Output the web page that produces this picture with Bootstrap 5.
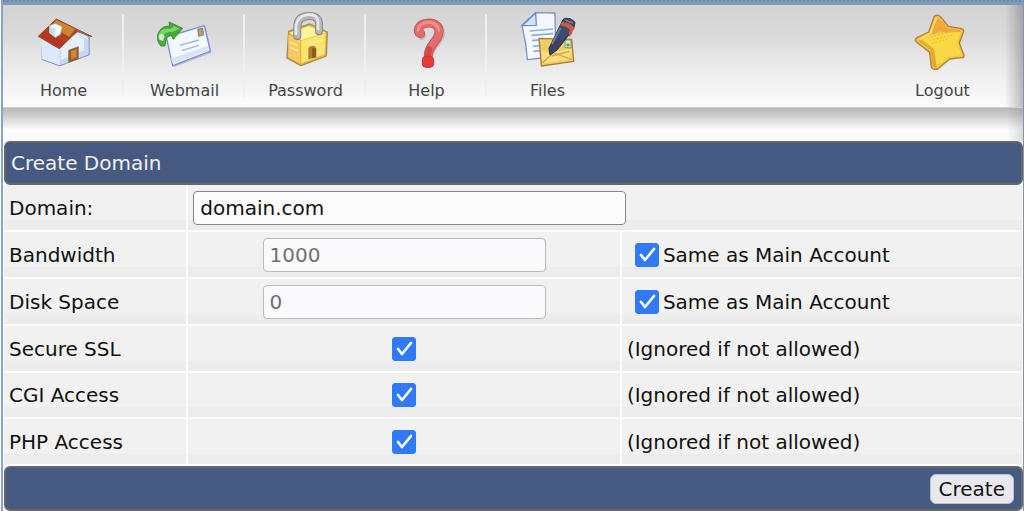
<!DOCTYPE html>
<html lang="en">
<head>
<meta charset="utf-8">
<meta name="viewport" content="width=device-width, initial-scale=1">
<title>Create Domain</title>
<link href="https://cdn.jsdelivr.net/npm/bootstrap@5.3.0/dist/css/bootstrap.min.css" rel="stylesheet">
<style>
  body { font-family: "DejaVu Sans", Verdana, sans-serif; font-size: 20px; line-height: 24px; color: #111; background: #fcfcfc; }
  .frame { border-left: 2px solid #8ba3c4; border-right: 1px solid #8093b5; margin-left: 1px; }
  .top-strip { height: 5px; background: repeating-linear-gradient(90deg, #6c89a9 0 2px, #7e99b6 2px 4px) top / 100% 2px no-repeat #809ab8; }
  .toolbar { height: 103px; background: linear-gradient(90deg, transparent calc(100% - 18px), rgba(90, 90, 90, .4)), linear-gradient(#d3d3d3, #dadada 30%, #e8e8e8 55%, #f3f3f5 80%, #fcfcfc); border-bottom: 1px solid #d0d0d0; }
  .toolbar-shade { height: 33px; background: linear-gradient(90deg, transparent calc(100% - 16px), rgba(120, 120, 120, .25)), linear-gradient(#bababa 0, #cacaca 7px, #ededed 17px, #fcfcfc 22px); }
  .tool { width: 121px; padding-top: 5px; font-size: 16px; line-height: 20px; color: #444; }
  .tool:hover { color: #222; }
  .tool svg { width: 60px; height: 60px; margin-bottom: 11px; }
  .tool-last { margin-right: 20px; }
  .tool-rule { background: linear-gradient(90deg, transparent calc(100% - 2px), #efefef 0) 0 9px / 100% 83px no-repeat; }
  .bar { min-height: 44px; margin-left: 1px; padding: 0 7px 0 5px; color: #f0f0f0; background: #465981; border: 2px solid #67676a; border-radius: 6px; }
  .bar-foot { min-height: 45px; }
  .settings { table-layout: fixed; margin-left: 1px; width: calc(100% - 2px); border-collapse: separate; border-spacing: 0; }
  .settings th, .settings td { height: 47px; padding: 0 5px; font-weight: 400; vertical-align: middle; border-right: 2px solid #fcfcfc; border-bottom: 2px solid #fcfcfc; background: linear-gradient(#f1f1f1 calc(100% - 10px), #ececec 0); }
  .settings .short > * { height: 46px; }
  .settings tr > :last-child { border-right: 0; }
  .col-name { width: 18.1%; }
  .col-value { width: 42.6%; }
  .field { height: 34px; padding: 0 6px; color: #111; background: #fcfcfc; border: 1px solid #85858f; border-radius: 4px; font-size: 20px; }
  .field:disabled { color: #6f6f6f; background: #fafafc; border-color: #b9b9bf; opacity: 1; }
  .field-wide { width: 433px; max-width: 100%; }
  .field-mid { width: 283px; max-width: 100%; }
  .tick { flex: none; width: 24px; height: 24px; margin: 0; }
  .tick.form-check-input[type=checkbox] { border-radius: 3px; }
  .tick.form-check-input:checked { background-color: #317af7; border-color: #317af7; background-size: 24px; background-position: center; background-image: url("data:image/svg+xml,%3Csvg xmlns='http://www.w3.org/2000/svg' viewBox='0 0 24 24'%3E%3Cpath d='M6 12l4 5 9-11' fill='none' stroke='white' stroke-width='2.6' stroke-linecap='round' stroke-linejoin='round'/%3E%3C/svg%3E"); }
  .create { height: 30px; padding: 0 8px; font-size: 20px; line-height: 24px; color: #111; background: #e9e9ed; border: 1px solid #c0c0c6; border-radius: 6px; }
  .create:hover { background: #dcdce0; }
</style>
</head>
<body>
<div class="frame">
  <header>
    <div class="top-strip"></div>
    <nav class="toolbar d-flex" aria-label="Main">
      <a href="#" class="tool tool-rule text-center text-decoration-none">
        <svg class="d-block mx-auto" viewBox="105 30 180 180" aria-hidden="true">
          <path d="M130 140 182 132 240 92 270 110V164L182 197 130 178Z" fill="#dce9fc" stroke="#7f94bd" stroke-width="4" stroke-linejoin="round"/>
          <path d="M128 120 182 148 236 100 268 118V163L182 196 129 177Z" fill="#dce9fc"/>
          <path d="M182 146V195L267 162V120L236 100Z" fill="#c4d8f8"/>
          <path d="M186 147 232 101 255 115V152L186 180Z" fill="#e6effe"/>
          <path d="M172 57 279 110 234 94 181 146 118 109Z" fill="#b63e22" stroke="#8a4a34" stroke-width="3" stroke-linejoin="round"/>
          <path d="M172 59 229 87 211 111 157 78Z" fill="#cd842e"/>
          <path d="M229 87 273 108 235 92Z" fill="#d77337"/>
          <path d="M120 108 181 144 196 129 135 94Z" fill="#b9341f"/>
          <path d="M152 77 169 71 188 80 184 103 169 112 152 99Z" fill="#f5fcff" stroke="#bddae3" stroke-width="2"/>
          <path d="M152 77 169 87V112L152 99Z" fill="#c6e2ef"/>
          <path d="M209 151 238 140V176L209 187Z" fill="#9a5a24" stroke="#8b5a34" stroke-width="2"/>
          <path d="M216 154 233 147V171L216 178Z" fill="#c9893d"/>
        </svg>Home</a>
      <a href="#" class="tool tool-rule text-center text-decoration-none">
        <svg class="d-block mx-auto" viewBox="468 30 180 180" aria-hidden="true">
          <path d="M508 120 617 77 634 155 521 199Z" fill="#8194ba" opacity=".55" transform="translate(3 3)"/>
          <path d="M502 111 616 77 634 153 521 197Z" fill="#f4f8ff" stroke="#7894cf" stroke-width="4" stroke-linejoin="round"/>
          <path d="M515 176 626 137 630 151 522 191Z" fill="#d8e4fc"/>
          <path d="M542 136 600 120M548 152 600 136" stroke="#9db7e8" stroke-width="4"/>
          <path d="M596 88 611 84 614 105 599 109Z" fill="#c89b48" stroke="#6980aa" stroke-width="3"/>
          <path d="M486 138C465 118 476 77 512 78L510 66 551 85 523 118 517 106C500 105 503 122 497 138Z" fill="#43ad35" stroke="#3b8e3c" stroke-width="3" stroke-linejoin="round"/>
          <path d="M479 117C476 93 491 84 513 87L526 79 542 86 522 95C493 96 488 108 489 119Z" fill="#8bdc76" opacity=".8"/>
          <path d="M480 106Q491 95 497 109L492 124 481 119Z" fill="#edffe9" opacity=".75"/>
        </svg>Webmail</a>
      <a href="#" class="tool tool-rule text-center text-decoration-none">
        <svg class="d-block mx-auto" viewBox="108 30 180 180" aria-hidden="true">
          <path d="M146 94 209 72 262 96 259 168 183 197 141 174Z" fill="#e8b63e" stroke="#a8894e" stroke-width="4" stroke-linejoin="round"/>
          <path d="M147 98 207 78 257 98 185 120Z" fill="#fff39b"/>
          <path d="M184 122 257 100 254 163 184 190Z" fill="#fbe46d"/>
          <path d="M145 104 179 121V190L145 171Z" fill="#f6ca60"/>
          <path d="M151 127 173 137M151 142 173 152M191 137 248 119M191 174 249 153" stroke="#ffed9a" stroke-width="4"/>
          <path d="M172 108V77Q174 49 207 48T237 79V94" fill="none" stroke="#808080" stroke-width="24" stroke-linecap="round"/>
          <path d="M172 107V77Q174 49 207 48T237 79V93" fill="none" stroke="#b5b6ba" stroke-width="19" stroke-linecap="round"/>
          <path d="M168 105V76Q173 47 205 44T234 77V90" fill="none" stroke="#e8e8ea" stroke-width="8"/>
          <path d="M205 150Q204 140 216 138T229 148V172L205 178Z" fill="#b47a2a"/>
          <path d="M216 145H228V171L216 174Z" fill="#8b5a22"/>
        </svg>Password</a>
      <a href="#" class="tool tool-rule text-center text-decoration-none">
        <svg class="d-block mx-auto" viewBox="477 30 180 180" aria-hidden="true">
          <path d="M548 105Q530 84 551 72C577 60 608 72 606 98C605 123 575 132 572 164" fill="none" stroke="#777" stroke-opacity=".3" stroke-width="22" stroke-linecap="round" transform="translate(4 3)"/>
          <path d="M548 101C532 94 543 73 564 70C590 66 605 79 603 98C601 123 573 134 571 164" fill="none" stroke="#bb5254" stroke-width="27" stroke-linecap="round"/>
          <path d="M548 101C532 94 543 73 564 70C590 66 605 79 603 98C601 123 573 134 571 164" fill="none" stroke="#e66b6b" stroke-width="22" stroke-linecap="round"/>
          <path d="M540 91Q544 68 570 67T603 91" fill="none" stroke="#f08f8d" stroke-width="9" stroke-linecap="round"/>
          <path d="M573 148 570 163" stroke="#db4846" stroke-width="19" stroke-linecap="round"/>
          <rect x="553" y="169" width="34" height="33" rx="11" fill="#e83a36" stroke="#c03a39" stroke-width="3"/>
        </svg>Help</a>
      <a href="#" class="tool text-center text-decoration-none">
        <svg class="d-block mx-auto" viewBox="111 30 180 180" aria-hidden="true">
          <path d="M164 38 222 39 223 102 237 168 139 179 134 131 123 76Z" fill="#f5f9ff" stroke="#7894cf" stroke-width="4" stroke-linejoin="round"/>
          <path d="M164 39 166 76 123 77Z" fill="#d2e2fb" stroke="#6589d2" stroke-width="4" stroke-linejoin="round"/>
          <path d="M146 93 216 87M151 106 216 101M153 122 190 118M156 139 184 136M157 154 184 151" stroke="#8bafeb" stroke-width="5"/>
          <path d="M174 115 272 118 278 184 181 198Z" fill="#f3cc60" stroke="#a77b3b" stroke-width="4" stroke-linejoin="round"/>
          <path d="M181 151 208 160 271 145V178L186 190Z" fill="#f9dd83"/>
          <path d="M184 189 217 158 272 179M212 168 265 154" fill="none" stroke="#d8a243" stroke-width="4"/>
          <path d="M252 120H270V144L252 143Z" fill="#dcedd1" stroke="#82925f" stroke-width="3"/>
          <circle cx="261" cy="135" r="5" fill="#5d9f58"/>
          <path d="M246 59Q267 48 282 68L278 86 229 149 207 165 204 145Z" fill="#394263" stroke="#252b43" stroke-width="3"/>
          <path d="M242 66Q265 65 280 82L272 103 264 112Q266 82 238 76Z" fill="#d05a3e"/>
          <path d="M248 55Q264 49 281 64L280 80Q264 66 246 67Z" fill="#394263"/>
          <path d="M238 78Q256 76 268 91L246 123 224 112Z" fill="#414a70"/>
          <path d="M253 61 276 69" stroke="#7887ac" stroke-width="5"/>
          <path d="M239 83 213 132" stroke="#6d789c" stroke-width="6"/>
        </svg>Files</a>
      <a href="#" class="tool tool-last text-center text-decoration-none ms-auto">
        <svg class="d-block mx-auto" viewBox="186 30 180 180" aria-hidden="true">
          <path d="M250 49Q260 42 269 51L292 79 331 86Q342 89 336 100L325 129 339 166Q340 174 331 173L296 177 263 205Q250 213 241 202L236 157 196 126Q189 118 198 113L233 96Z" fill="#f5c53c" stroke="#a88040" stroke-width="4" stroke-linejoin="round"/>
          <path d="M257 49 292 84 331 91 315 108 265 94 240 107Z" fill="#f0aa3c"/>
          <path d="M204 121 239 104 276 98 329 96 318 128 331 166 293 171 257 198 249 149Z" fill="#f9d845"/>
          <path d="M198 121 239 150 245 200 257 203 249 147 213 121Z" fill="#e5a632"/>
          <path d="M257 52 239 99 207 117" fill="none" stroke="#ffdf63" stroke-width="5"/>
          <path d="M229 112 316 91M236 121 312 103M243 130 294 116" stroke="#eab038" stroke-width="3" stroke-dasharray="4 7"/>
        </svg>Logout</a>
    </nav>
    <div class="toolbar-shade"></div>
  </header>

  <form onsubmit="return false">
    <h1 class="bar d-flex align-items-center mb-0 fs-5 fw-normal">Create Domain</h1>
    <table class="settings">
      <colgroup><col class="col-name"><col class="col-value"><col></colgroup>
      <tbody>
        <tr>
          <th scope="row"><label for="domain">Domain:</label></th>
          <td colspan="2"><input id="domain" class="field field-wide d-block" type="text" value="domain.com"></td>
        </tr>
        <tr>
          <th scope="row"><label for="bandwidth">Bandwidth</label></th>
          <td><input id="bandwidth" class="field field-mid d-block mx-auto" type="text" value="1000" disabled></td>
          <td><div class="d-flex align-items-center ps-2"><input id="same-bw" class="form-check-input tick me-1" type="checkbox" checked><label for="same-bw">Same as Main Account</label></div></td>
        </tr>
        <tr>
          <th scope="row"><label for="disk">Disk Space</label></th>
          <td><input id="disk" class="field field-mid d-block mx-auto" type="text" value="0" disabled></td>
          <td><div class="d-flex align-items-center ps-2"><input id="same-disk" class="form-check-input tick me-1" type="checkbox" checked><label for="same-disk">Same as Main Account</label></div></td>
        </tr>
        <tr>
          <th scope="row"><label for="ssl">Secure SSL</label></th>
          <td><input id="ssl" class="form-check-input tick d-block mx-auto" type="checkbox" checked></td>
          <td>(Ignored if not allowed)</td>
        </tr>
        <tr class="short">
          <th scope="row"><label for="cgi">CGI Access</label></th>
          <td><input id="cgi" class="form-check-input tick d-block mx-auto" type="checkbox" checked></td>
          <td>(Ignored if not allowed)</td>
        </tr>
        <tr>
          <th scope="row"><label for="php">PHP Access</label></th>
          <td><input id="php" class="form-check-input tick d-block mx-auto" type="checkbox" checked></td>
          <td>(Ignored if not allowed)</td>
        </tr>
      </tbody>
    </table>
    <div class="bar bar-foot d-flex align-items-center justify-content-end">
      <button type="submit" class="btn create">Create</button>
    </div>
  </form>
</div>
<script src="https://cdn.jsdelivr.net/npm/bootstrap@5.3.0/dist/js/bootstrap.bundle.min.js"></script>
</body>
</html>
